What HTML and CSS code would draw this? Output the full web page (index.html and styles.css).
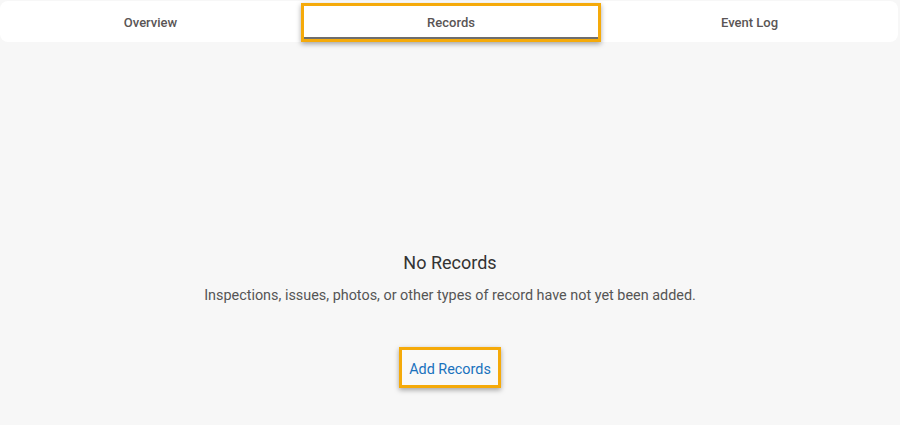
FILE: index.html
```html
<!DOCTYPE html>
<html>
<head>
<meta charset="utf-8">
<link rel="stylesheet" href="styles.css">
</head>
<body>
<div class="page">
  <nav class="tabs">
    <div class="tab">Overview</div>
    <div class="tab tab-active">Records</div>
    <div class="tab">Event Log</div>
  </nav>
  <main class="empty">
    <h1 class="empty-title">No Records</h1>
    <p class="empty-text">Inspections, issues, photos, or other types of record have not yet been added.</p>
    <button class="add-btn">Add Records</button>
  </main>
</div>
</body>
</html>
```
FILE: styles.css
```css
html, body {
  margin: 0;
  padding: 0;
  height: 100%;
}
body {
  background: #f7f7f7;
  font-family: Roboto, "Liberation Sans", sans-serif;
}
.page {
  width: 900px;
  height: 425px;
  display: flex;
  flex-direction: column;
}
.tabs {
  display: grid;
  grid-template-columns: 301px 300px 1fr;
  height: 41px;
  margin: 1px 2px 0 0;
  background: #ffffff;
  border-radius: 8px;
}
.tab {
  display: flex;
  align-items: center;
  justify-content: center;
  font-size: 13px;
  font-weight: 500;
  color: #5a5555;
  padding-top: 1px;
}
.tab-active {
  position: relative;
  margin-top: 2px;
  border: 3px solid #f5aa0a;
  box-shadow: 0 2px 5px rgba(0, 0, 0, 0.35), inset 0 -2px 0 #6e6e6e;
  background: #ffffff;
  padding-top: 0;
}
.empty {
  flex: 1;
  display: flex;
  flex-direction: column;
  align-items: center;
  padding-top: 210px;
}
.empty-title {
  margin: 0;
  font-size: 18px;
  font-weight: 400;
  color: #333333;
  line-height: 22px;
}
.empty-text {
  margin: 13px 0 0;
  font-size: 14.4px;
  color: #555555;
  line-height: 18px;
}
.add-btn {
  margin-top: 42px;
  width: 102px;
  height: 41px;
  border: 3px solid #f5aa0a;
  background: #f9f9f9;
  box-shadow: 0 2px 5px rgba(0, 0, 0, 0.35);
  font-family: Roboto, "Liberation Sans", sans-serif;
  font-size: 14.4px;
  color: #1a72bd;
  padding: 3px 0 0;
  cursor: pointer;
}
```
